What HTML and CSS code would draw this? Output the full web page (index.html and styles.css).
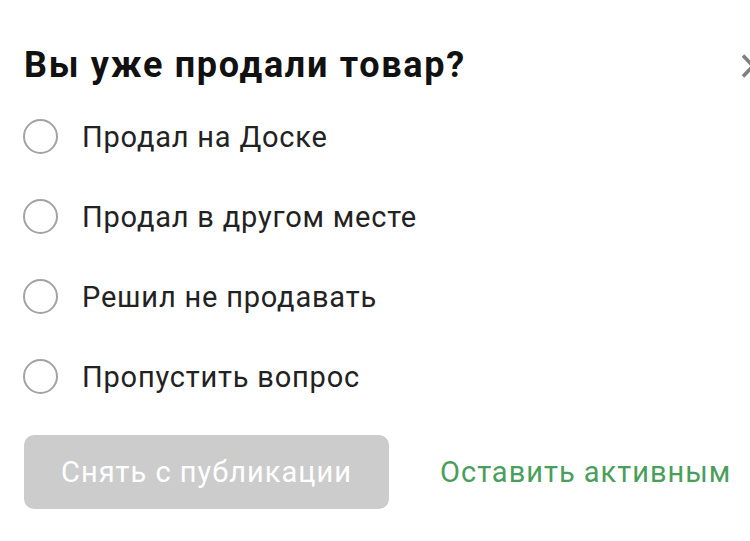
FILE: index.html
```html
<!DOCTYPE html>
<html lang="ru">
<head>
<meta charset="utf-8">
<link rel="stylesheet" href="styles.css">
</head>
<body>
<div class="dialog">
  <div class="header">
    <h1 class="title">Вы уже продали товар?</h1>
    <span class="close" aria-label="Закрыть">
      <svg width="24" height="24" viewBox="0 0 24 24"><path d="M2 1.5 L22 22.5 M22 1.5 L2 22.5" stroke="#808080" stroke-width="3.6" fill="none"/></svg>
    </span>
  </div>
  <ul class="options">
    <li class="option"><span class="radio"></span><span class="label">Продал на Доске</span></li>
    <li class="option"><span class="radio"></span><span class="label">Продал в другом месте</span></li>
    <li class="option"><span class="radio"></span><span class="label">Решил не продавать</span></li>
    <li class="option"><span class="radio"></span><span class="label">Пропустить вопрос</span></li>
  </ul>
  <div class="actions">
    <button class="btn-disabled">Снять с публикации</button>
    <button class="btn-link">Оставить активным</button>
  </div>
</div>
</body>
</html>
```
FILE: styles.css
```css
html, body {
  margin: 0;
  padding: 0;
  background: #ffffff;
  overflow: hidden;
}
body {
  font-family: Roboto, "Noto Sans", "Liberation Sans", sans-serif;
  width: 750px;
  height: 541px;
}
.dialog {
  padding: 45px 0 0 24px;
}
.header {
  display: flex;
  align-items: flex-start;
  width: 726px;
}
.title {
  margin: 0;
  font-size: 36px;
  line-height: 40px;
  font-weight: 700;
  letter-spacing: 1.7px;
  color: #111111;
  white-space: nowrap;
}
.close {
  display: block;
  width: 24px;
  height: 24px;
  margin-top: 9px;
  margin-left: auto;
  margin-right: -15px;
  flex: none;
}
.close svg { display: block; }
.options {
  list-style: none;
  margin: 11px 0 0 0;
  padding: 0;
}
.option {
  display: flex;
  align-items: center;
  height: 80px;
}
.radio {
  box-sizing: border-box;
  width: 35px;
  height: 35px;
  border: 2px solid #a3a3a3;
  border-radius: 50%;
  margin-left: -1px;
  flex: none;
}
.label {
  margin-left: 24px;
  font-size: 29px;
  letter-spacing: 0.8px;
  color: #222222;
  position: relative;
  top: 1px;
  white-space: nowrap;
}
.actions {
  display: flex;
  align-items: center;
  margin-top: 19px;
}
.btn-disabled {
  width: 365px;
  height: 74px;
  border: none;
  border-radius: 10px;
  background: #cccccc;
  color: #ffffff;
  font-family: inherit;
  font-size: 29px;
  letter-spacing: 1px;
  padding: 0;
}
.btn-link {
  border: none;
  background: none;
  padding: 0;
  margin-left: 51px;
  color: #4a9e5c;
  font-family: inherit;
  font-size: 29px;
  letter-spacing: 1px;
}
```
